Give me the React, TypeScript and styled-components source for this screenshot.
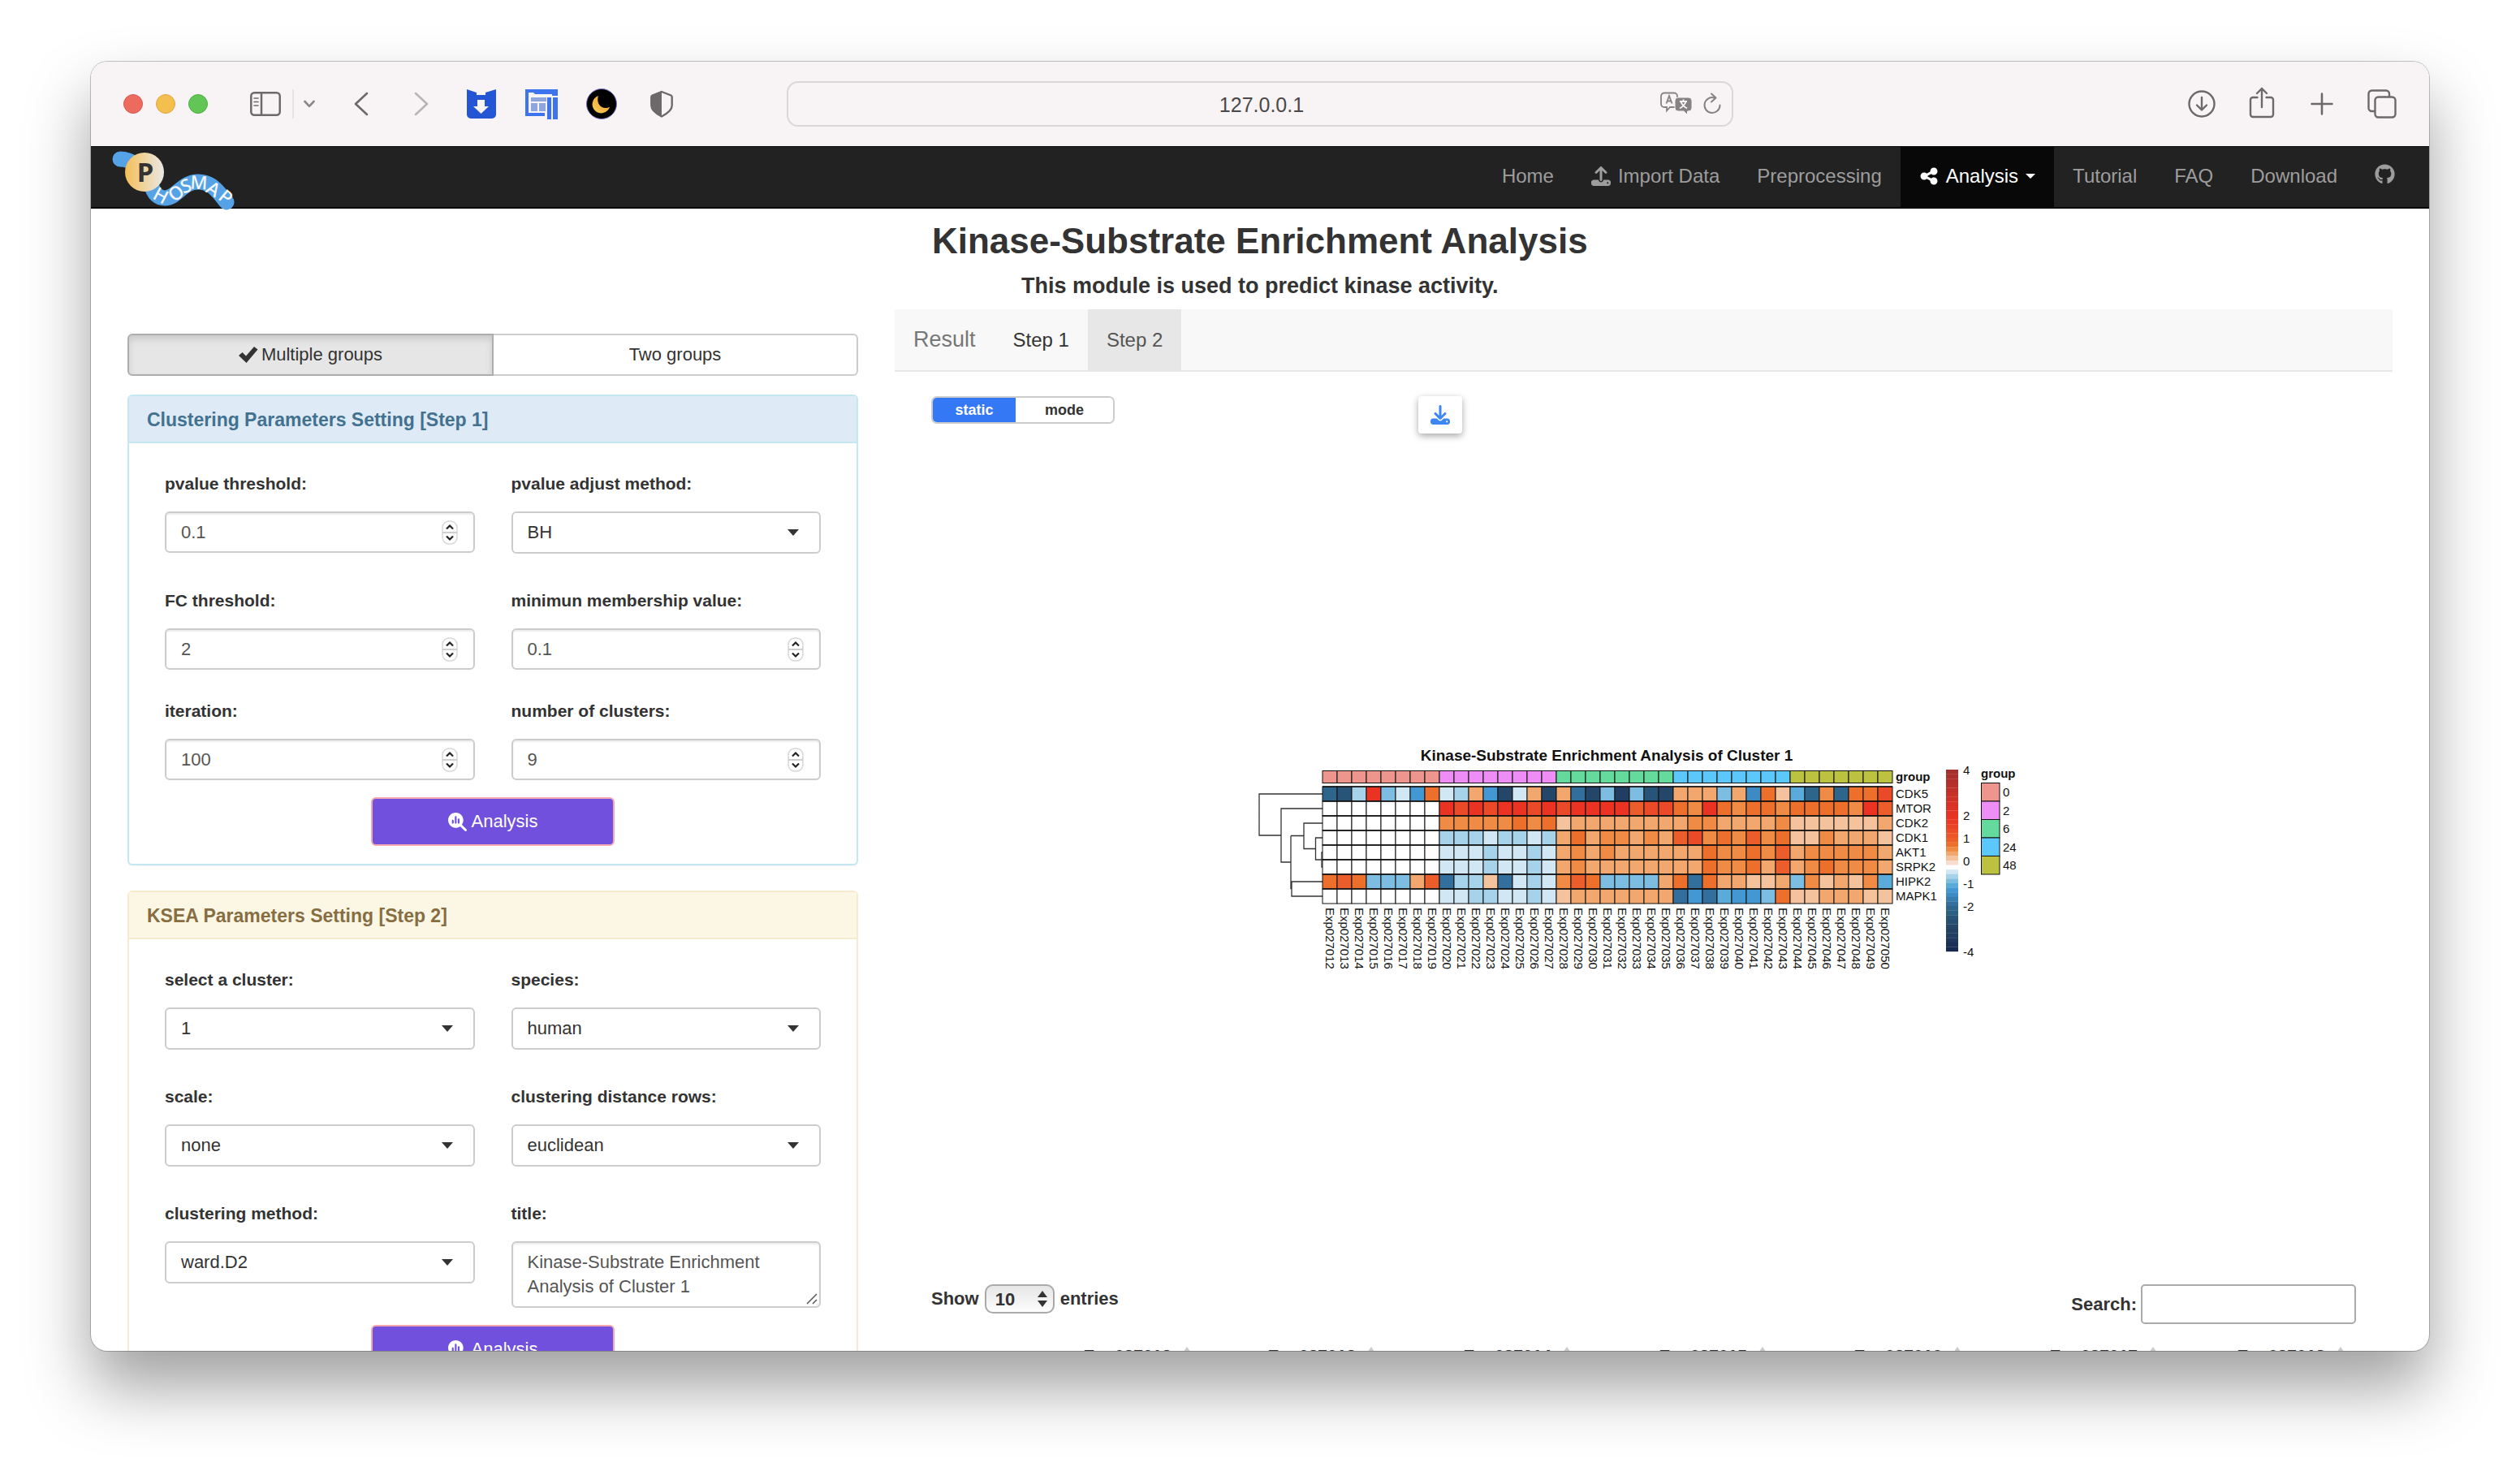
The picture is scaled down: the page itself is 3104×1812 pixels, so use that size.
import React from "react";
import styled, { createGlobalStyle, css } from "styled-components";
import {
  FaDownload,
  FaGithub,
  FaMagnifyingGlassChart,
  FaShareNodes,
  FaUpload,
} from "react-icons/fa6";

const sans = `"Liberation Sans", Arial, Helvetica, sans-serif`;

const GlobalStyle = createGlobalStyle`
  * { box-sizing: border-box; }
  body { margin: 0; background: #fff; color: #333; font-family: ${sans}; font-size: 22px; line-height: 30px; }
  button, input, select, textarea { font-family: inherit; margin: 0; }
`;

/* ---------- window chrome ---------- */

const Desktop = styled.div`
  height: 100vh;
  min-height: 900px;
  padding: 76px 112px 148px;
  display: flex;
  overflow: hidden;
`;

const BrowserWindow = styled.div`
  flex: 1;
  min-width: 0;
  display: flex;
  flex-direction: column;
  border-radius: 20px;
  overflow: hidden;
  background: #fff;
  box-shadow: 0 0 0 1px rgba(0, 0, 0, 0.22), 0 44px 80px rgba(0, 0, 0, 0.38);
`;

const Toolbar = styled.header`
  flex: none;
  height: 104px;
  display: grid;
  grid-template-columns: 1fr 1166px 1fr;
  align-items: center;
  background: #f8f4f5;
  color: #6d6869;
`;

const ToolGroup = styled.div<{ $end?: boolean }>`
  display: flex;
  align-items: center;
  justify-content: ${(p) => (p.$end ? "flex-end" : "flex-start")};
  padding: ${(p) => (p.$end ? "0 21px 0 0" : "0 0 0 40px")};
`;

const Lights = styled.div`
  display: flex;
  gap: 16px;
  margin-right: 52px;
`;

const Light = styled.span<{ $fill: string; $edge: string }>`
  width: 24px;
  height: 24px;
  border-radius: 50%;
  background: ${(p) => p.$fill};
  border: 1px solid ${(p) => p.$edge};
`;

const PlainButton = styled.button`
  display: flex;
  align-items: center;
  justify-content: center;
  padding: 0;
  border: 0;
  background: none;
  color: inherit;
`;

const ToolButton = styled(PlainButton)<{ $faint?: boolean }>`
  width: 74px;
  height: 56px;
  color: ${(p) => (p.$faint ? "#b9b5b6" : "inherit")};
`;

const ToolDivider = styled.span`
  width: 2px;
  height: 36px;
  margin: 0 12px 0 14px;
  background: #e6e2e3;
`;

const ChevronButton = styled(PlainButton)`
  margin-right: 20px;
`;

const AddressBar = styled.div`
  display: flex;
  align-items: center;
  height: 56px;
  padding: 0 12px 0 104px;
  border: 2px solid #dbd7d8;
  border-radius: 14px;
  gap: 12px;
`;

const AddressInput = styled.input`
  flex: 1;
  min-width: 0;
  border: 0;
  background: none;
  text-align: center;
  font-size: 25px;
  line-height: 30px;
  color: #4b4849;
  padding: 2px 0 0;
`;

/* ---------- site navigation ---------- */

const Navbar = styled.nav`
  flex: none;
  display: flex;
  justify-content: space-between;
  padding: 0 19px 0 24px;
  background: #222;
  border-top: 1px solid #080808;
  border-bottom: 2px solid #080808;
`;

const LogoLink = styled.a`
  display: block;
  width: 156px;
  height: 74px;
`;

const Logo = styled.svg`
  display: block;
  overflow: visible;
`;

const NavList = styled.ul`
  display: flex;
  margin: 0;
  padding: 0;
  list-style: none;
`;

const NavLink = styled.a<{ $active?: boolean }>`
  display: flex;
  align-items: center;
  gap: 9px;
  padding: 21px 23px 23px;
  font-size: 24px;
  line-height: 30px;
  text-decoration: none;
  color: ${(p) => (p.$active ? "#fff" : "#9d9d9d")};
  background: ${(p) => (p.$active ? "#080808" : "transparent")};
`;

/* ---------- page ---------- */

const Page = styled.main`
  flex: 1;
  min-height: 0;
  overflow: hidden;
  display: grid;
  grid-template-columns: minmax(0, 1fr) minmax(0, 2.05fr);
  align-items: start;
  gap: 45px;
  padding: 0 45px;
`;

const Sidebar = styled.section`
  padding-top: 154px;
`;

const GroupToggle = styled.div`
  display: flex;
  margin-bottom: 23px;
`;

const GroupButton = styled.button<{ $on?: boolean }>`
  flex: 1;
  display: flex;
  align-items: center;
  justify-content: center;
  gap: 4px;
  height: 52px;
  padding: 0;
  font-size: 22px;
  line-height: 30px;
  color: #333;
  border: 2px solid #ccc;
  background: #fff;
  ${(p) =>
    p.$on
      ? css`
          border-color: #adadad;
          border-radius: 6px 0 0 6px;
          background: #e6e6e6;
          box-shadow: inset 0 5px 8px rgba(0, 0, 0, 0.125);
        `
      : css`
          border-left: 0;
          border-radius: 0 6px 6px 0;
        `}
`;

type Tone = "info" | "warning";
const tones = {
  info: { bg: "#deebf6", edge: "#c4e7f1", text: "#437190" },
  warning: { bg: "#fbf7e4", edge: "#f7ebcf", text: "#876d42" },
};

const Panel = styled.form<{ $tone: Tone }>`
  margin-bottom: 31px;
  border: 2px solid ${(p) => tones[p.$tone].edge};
  border-radius: 6px;
  background: #fff;
  box-shadow: 0 1px 2px rgba(0, 0, 0, 0.05);
`;

const PanelTitle = styled.h3<{ $tone: Tone }>`
  margin: 0;
  padding: 16px 22px 14px;
  font-size: 23px;
  line-height: 26px;
  font-weight: bold;
  color: ${(p) => tones[p.$tone].text};
  background: ${(p) => tones[p.$tone].bg};
  border-bottom: 2px solid ${(p) => tones[p.$tone].edge};
`;

const PanelBody = styled.div`
  padding: 35px 44px 22px;
`;

const FieldRow = styled.div<{ $gap: number }>`
  display: grid;
  grid-template-columns: 1fr 1fr;
  align-items: start;
  column-gap: 45px;
  margin-bottom: ${(p) => p.$gap}px;
`;

const Label = styled.label`
  display: block;
  margin-bottom: 19px;
  font-size: 21px;
  line-height: 30px;
  font-weight: bold;
`;

const control = css`
  width: 100%;
  border: 2px solid #ccc;
  border-radius: 6px;
  background: #fff;
`;

const NumberBox = styled.div`
  ${control}
  display: flex;
  align-items: center;
  height: 51px;
  padding: 0 19px 0 18px;
  box-shadow: inset 0 2px 2px rgba(0, 0, 0, 0.075);
`;

const NumberInput = styled.input`
  flex: 1;
  min-width: 0;
  padding: 0;
  border: 0;
  background: none;
  font-size: 22px;
  line-height: 30px;
  color: #555;
  appearance: textfield;
  -moz-appearance: textfield;
  &::-webkit-inner-spin-button,
  &::-webkit-outer-spin-button {
    appearance: none;
    margin: 0;
  }
`;

const SelectBox = styled.div`
  position: relative;
`;

const Select = styled.select`
  ${control}
  display: block;
  height: 52px;
  padding: 0 50px 0 18px;
  appearance: none;
  font-size: 22px;
  line-height: 30px;
  color: #333;
`;

const SelectCaret = styled.svg`
  position: absolute;
  right: 27px;
  top: 22px;
  pointer-events: none;
`;

const AreaBox = styled.div`
  position: relative;
`;

const TextArea = styled.textarea`
  ${control}
  display: block;
  height: 82px;
  padding: 9px 18px;
  resize: none;
  overflow: hidden;
  font-size: 22px;
  line-height: 30px;
  color: #555;
  box-shadow: inset 0 2px 2px rgba(0, 0, 0, 0.075);
`;

const ResizeGrip = styled.svg`
  position: absolute;
  right: 4px;
  bottom: 4px;
  pointer-events: none;
`;

const RunButton = styled.button`
  display: flex;
  align-items: center;
  justify-content: center;
  gap: 6px;
  width: 300px;
  height: 60px;
  margin: 0 auto;
  padding: 0;
  font-size: 22px;
  line-height: 30px;
  color: #fff;
  background: #7150dd;
  border: 2px solid #f4a9ae;
  border-radius: 6px;
`;

/* ---------- results ---------- */

const Results = styled.section`
  min-width: 0;
`;

const Heading = styled.div`
  width: calc(50% - 23px);
  padding: 15px 0 10px;
  text-align: center;
  white-space: nowrap;
`;

const Title = styled.h1`
  margin: 0 0 11px;
  font-size: 44px;
  line-height: 50px;
  font-weight: bold;
`;

const Subtitle = styled.h2`
  margin: 0;
  font-size: 27px;
  line-height: 38px;
  font-weight: bold;
`;

const TabBar = styled.div`
  display: flex;
  background: #f8f8f8;
  border-bottom: 2px solid #e7e7e7;
`;

const TabBrand = styled.span`
  padding: 22px 23px;
  font-size: 27px;
  line-height: 31px;
  color: #777;
`;

const Tab = styled.button<{ $active?: boolean }>`
  padding: 0 23px;
  border: 0;
  font-size: 24px;
  line-height: 30px;
  color: ${(p) => (p.$active ? "#555" : "#333")};
  background: ${(p) => (p.$active ? "#e7e7e7" : "transparent")};
`;

const TabContent = styled.div`
  padding: 30px 45px 0;
`;

const PlotTools = styled.div`
  display: grid;
  grid-template-columns: repeat(3, 1fr);
  gap: 45px;
  align-items: start;
`;

const ModeSwitch = styled.div`
  display: flex;
  width: 226px;
  height: 34px;
  border: 2px solid #ccc;
  border-radius: 7px;
  overflow: hidden;
`;

const ModeButton = styled.button<{ $on?: boolean }>`
  flex: ${(p) => (p.$on ? "0 0 102px" : "1")};
  padding: 0;
  border: 0;
  font-size: 18px;
  line-height: 30px;
  font-weight: bold;
  color: ${(p) => (p.$on ? "#fff" : "#333")};
  background: ${(p) => (p.$on ? "#3478f6" : "#fff")};
`;

const DownloadButton = styled(PlainButton)`
  width: 54px;
  height: 46px;
  border-radius: 4px;
  color: #3d86f5;
  background: #fff;
  box-shadow: 0 3px 8px rgba(0, 0, 0, 0.35);
`;

const PlotArea = styled.div`
  display: flex;
  align-items: center;
  justify-content: center;
  min-height: 1048px;
`;

const TableTools = styled.div`
  display: flex;
  justify-content: space-between;
  align-items: flex-start;
  height: 49px;
  margin-bottom: 24px;
  font-size: 22px;
  font-weight: bold;
`;

const InlineLabel = styled.label<{ $tall?: boolean }>`
  display: flex;
  align-items: center;
  gap: ${(p) => (p.$tall ? "5px" : "7px")};
  height: ${(p) => (p.$tall ? "49px" : "36px")};
`;

const LengthBox = styled.span`
  position: relative;
  display: block;
`;

const LengthSelect = styled.select`
  display: block;
  width: 86px;
  height: 36px;
  padding: 0 0 0 11px;
  appearance: none;
  font-size: 22px;
  font-weight: bold;
  color: #333;
  border: 2px solid #a9a9a9;
  border-radius: 10px;
  background: linear-gradient(#e6e6e6, #fdfdfd);
`;

const LengthArrows = styled.svg`
  position: absolute;
  right: 9px;
  top: 8px;
  pointer-events: none;
`;

const SearchInput = styled.input`
  width: 265px;
  height: 49px;
  padding: 0 8px;
  border: 2px solid #aaa;
  border-radius: 5px;
  font-size: 22px;
`;

const DataTable = styled.table`
  width: 100%;
  table-layout: fixed;
  border-collapse: collapse;
  font-size: 21px;
`;

const HeadCell = styled.th`
  padding: 0 14px 0 0;
  text-align: right;
  white-space: nowrap;
`;

const SortMark = styled.svg`
  margin-left: 14px;
  vertical-align: top;
  margin-top: 4px;
`;

/* ---------- heat map data ---------- */

const palette: Record<string, string> = {
  ".": "#ffffff",
  a: "#f4c39d", b: "#f2a76f", c: "#f08b45", d: "#ec6f2c", e: "#eb5d2a", f: "#ea4a27", g: "#ea3323",
  p: "#d1e7f3", q: "#a6d3ea", r: "#7dbde2", s: "#5aaada", t: "#4397d3", u: "#3e8bc3",
  v: "#326f9c", w: "#2e668b", x: "#285577", y: "#244769", z: "#213d62",
};

const kinases: [string, string][] = [
  ["CDK5", "wxqgrptdpqbtypby" + "bvyrzrxybbbrbudaswcwddf"],
  ["MTOR", "........gfgfggfg" + "fggggeffdcgdcddcddddcge"],
  ["CDK2", "........cccccdcd" + "abbbbbbbbccbbbbcaaaaaab"],
  ["CDK1", "........qqqpqqpq" + "bdbccbcbefcdcecdaacbbba"],
  ["AKT1", "........pppqppqp" + "bcbcbbbbbbdccdcebcccccb"],
  ["SRPK2", "........pppqppqp" + "bcbbbbbbbbdccdbebcdcccb"],
  ["HIPK2", "dedrrrbevqqavpqp" + "cedrrrrbdvdbbaabrcabacs"],
  ["MAPK1", "........ppqqppqp" + "abbbbbbbvtvsttrdaabbbaa"],
];

const groups = [
  { name: "0", color: "#ee958d", size: 8 },
  { name: "2", color: "#ee8df6", size: 8 },
  { name: "6", color: "#64da9c", size: 8 },
  { name: "24", color: "#5cc7fa", size: 8 },
  { name: "48", color: "#bdc140", size: 7 },
];

const groupColors = groups.flatMap((g) => Array<string>(g.size).fill(g.color));

const scale = [
  "#a6302c", "#ab302b", "#b2302b", "#b9302a", "#c03029", "#c73128", "#ce3127", "#d63226", "#dd3225", "#e43224",
  "#ea3323", "#ea3b25", "#ea4426", "#eb4d27", "#eb5628", "#eb5f2a", "#ec6f2c", "#f08b45", "#f2a76f", "#f4c39d",
  "#f9ddcc", "#ffffff", "#d1e7f3", "#a6d3ea", "#7dbde2", "#5aaada", "#4397d3", "#3e8bc3", "#377db0", "#326f9c",
  "#2e668b", "#285f83", "#285577", "#264e70", "#244769", "#234263", "#213d62", "#1f375e", "#1b3058", "#172851",
];

const CELL = 18;
const GX = 88;
const GY = 49;

function Heatmap() {
  return (
    <svg width="968" height="276" viewBox="0 0 968 276" role="img" aria-label="Kinase heat map" fontFamily={sans} fontSize="15" fill="#111">
      <text x="438" y="17" textAnchor="middle" fontSize="19" fontWeight="bold">
        Kinase-Substrate Enrichment Analysis of Cluster 1
      </text>
      <path
        d="M88 58H10V109H37 M88 76H37V142H49 M49 109.500V174.500H50 M49 109.500H65 M88 94H65V125.500H79.500 M88 112H79.500V139H87 M88 130H87V148H88 M88 166H50V184H88"
        fill="none"
        stroke="#333"
        strokeWidth="1.300"
      />
      <g stroke="#111" strokeWidth="1">
        {groupColors.map((c, i) => (
          <rect key={i} x={GX + i * CELL} y="29.500" width={CELL} height="15" fill={c} />
        ))}
        {kinases.map(([name, cells], r) =>
          cells.split("").map((k, i) => (
            <rect key={name + i} x={GX + i * CELL} y={GY + r * CELL} width={CELL} height={CELL} fill={palette[k]} />
          )),
        )}
        {kinases.map(([name], r) => (
          <path key={name} d={`M${GX} ${GY + r * CELL}h${39 * CELL}`} strokeWidth="1.600" />
        ))}
      </g>
      <text x="794" y="42" fontWeight="bold">group</text>
      {kinases.map(([name], r) => (
        <text key={name} x="794" y={GY + r * CELL + 14}>{name}</text>
      ))}
      {groupColors.map((_, i) => (
        <text key={i} transform={`translate(${GX + i * CELL + 4} 198) rotate(90)`}>{`Exp0270${12 + i}`}</text>
      ))}
      {scale.map((c, i) => (
        <rect key={i} x="856" y={28 + i * 5.6} width="15" height="5.800" fill={c} />
      ))}
      {[4, 2, 1, 0, -1, -2, -4].map((v) => (
        <text key={v} x="877" y={145.500 - v * 28}>{v}</text>
      ))}
      <text x="899" y="38" fontWeight="bold">group</text>
      {groups.map((g, i) => (
        <g key={g.name}>
          <rect x="899.500" y={44.500 + i * 22.500} width="22.500" height="22.500" fill={g.color} stroke="#111" />
          <text x="926" y={61 + i * 22.500}>{g.name}</text>
        </g>
      ))}
    </svg>
  );
}

/* ---------- form parts ---------- */

function NumberField({ id, label, value }: { id: string; label: string; value: string }) {
  return (
    <div>
      <Label htmlFor={id}>{label}</Label>
      <NumberBox>
        <NumberInput id={id} type="number" step="any" defaultValue={value} />
        <svg width="20" height="30" viewBox="0 0 20 30" fill="none" aria-hidden="true">
          <rect x="1" y="1" width="18" height="28" rx="8" fill="#fff" stroke="#d6d6d6" strokeWidth="1.500" />
          <path d="M1 15h18" stroke="#cfcfcf" strokeWidth="2" />
          <path d="M6 10.500l4-4 4 4M6 19.500l4 4 4-4" stroke="#222" strokeWidth="2.200" />
        </svg>
      </NumberBox>
    </div>
  );
}

function SelectField({ id, label, value }: { id: string; label: string; value: string }) {
  return (
    <div>
      <Label htmlFor={id}>{label}</Label>
      <SelectBox>
        <Select id={id} defaultValue={value}>
          <option>{value}</option>
        </Select>
        <SelectCaret width="14" height="8" viewBox="0 0 14 8" aria-hidden="true">
          <path d="M0 0h14L7 8z" fill="#333" />
        </SelectCaret>
      </SelectBox>
    </div>
  );
}

function AnalysisButton() {
  return (
    <RunButton type="button">
      <FaMagnifyingGlassChart size={23} />
      Analysis
    </RunButton>
  );
}

const logoLetters: [string, number, number, number][] = [
  ["H", 62, 57, 28],
  ["O", 81, 54, -38],
  ["S", 93, 45, -20],
  ["M", 109, 41, 3],
  ["A", 127, 49, 32],
  ["P", 142, 59, 40],
];

function SiteLogo() {
  return (
    <Logo width="156" height="77" viewBox="0 0 156 77" role="img" aria-label="PhosMap">
      <defs>
        <linearGradient id="coin" x1="0" x2="1" y1="0" y2="0">
          <stop offset="0" stopColor="#f4bf58" />
          <stop offset="1" stopColor="#e9e8e6" />
        </linearGradient>
      </defs>
      <g fill="none" stroke="#55a3e6" strokeWidth="19" strokeLinecap="round" transform="translate(0 3)">
        <path d="M12 12Q22 12 32 19" />
        <path d="M50 42C53 56 60 60 67 60C82 60 88 40 108 40C126 40 134 54 143 65" />
      </g>
      <g transform="translate(0 3)" textAnchor="middle">
        <circle cx="42" cy="28" r="24" fill="url(#coin)" />
        <text x="43" y="40" fontFamily={`"Noto Sans", sans-serif`} fontSize="33" fontWeight="bold" fill="#333">P</text>
        {logoLetters.map(([ch, x, y, turn]) => (
          <text
            key={ch + x}
            transform={`translate(${x} ${y}) rotate(${turn})`}
            y="8"
            fontFamily={`"Noto Sans", sans-serif`}
            fontSize="23"
            fontWeight="500"
            fill="#f4f6f8"
          >
            {ch}
          </text>
        ))}
      </g>
    </Logo>
  );
}

const headers: [string, string][] = [
  ["Exp027012", "19.03%"],
  ["Exp027013", "12.94%"],
  ["Exp027014", "13.73%"],
  ["Exp027015", "13.73%"],
  ["Exp027016", "13.68%"],
  ["Exp027017", "13.73%"],
  ["Exp027018", "13.16%"],
];

export default function App() {
  return (
    <Desktop>
      <GlobalStyle />
      <BrowserWindow>
        <Toolbar>
          <ToolGroup>
            <Lights>
              <Light $fill="#ed6a5f" $edge="#d75850" />
              <Light $fill="#f5bf4f" $edge="#dda640" />
              <Light $fill="#61c655" $edge="#50ab45" />
            </Lights>
            <PlainButton aria-label="Sidebar">
              <svg width="38" height="30" viewBox="0 0 38 30" fill="none" stroke="currentColor" strokeWidth="2.500">
                <rect x="1.300" y="1.300" width="35.400" height="27.400" rx="4" />
                <path d="M14 1v28" />
                <path d="M5 8h5M5 12.500h5M5 17h5" strokeWidth="1.600" strokeLinecap="round" />
              </svg>
            </PlainButton>
            <ToolDivider />
            <ChevronButton aria-label="Sidebar options">
              <svg width="14" height="10" viewBox="0 0 14 10" fill="none" stroke="#8b8788" strokeWidth="2.600" strokeLinecap="round" strokeLinejoin="round">
                <path d="M1.500 2l5.500 5.800L12.500 2" />
              </svg>
            </ChevronButton>
            <ToolButton aria-label="Back">
              <svg width="18" height="30" viewBox="0 0 18 30" fill="none" stroke="currentColor" strokeWidth="2.600" strokeLinecap="round" strokeLinejoin="round">
                <path d="M16 2L2 15l14 13" />
              </svg>
            </ToolButton>
            <ToolButton aria-label="Forward" $faint>
              <svg width="18" height="30" viewBox="0 0 18 30" fill="none" stroke="currentColor" strokeWidth="2.600" strokeLinecap="round" strokeLinejoin="round">
                <path d="M2 2l14 13L2 28" />
              </svg>
            </ToolButton>
            <ToolButton aria-label="Saver extension">
              <svg width="36" height="36" viewBox="0 0 36 36">
                <path d="M0 0l12 4v3h11V4l13-4v31a5 5 0 0 1-5 5H5a5 5 0 0 1-5-5z" fill="#2355d5" />
                <path d="M13 13h9v8h5l-9.500 9L8 21h5z" fill="#f8f4f5" />
              </svg>
            </ToolButton>
            <ToolButton aria-label="Reader extension">
              <svg width="40" height="38" viewBox="0 0 40 38">
                <path d="M0 1h40v8h-7v-2H12l-2-2H4v25h20v4H0z" fill="#3d74ee" />
                <g fill="#8fa5dd">
                  <path d="M7 11h19v5H7zM7 18h8v10H7zM17 18h8v10h-8z" />
                </g>
                <path d="M27 11h5v27h-5zM34 11h6v27h-6z" fill="#3d74ee" />
              </svg>
            </ToolButton>
            <ToolButton aria-label="Night mode extension">
              <svg width="38" height="38" viewBox="0 0 38 38">
                <defs>
                  <linearGradient id="moon" x1="0" x2="1" y1="1" y2="0">
                    <stop offset="0" stopColor="#f8cf57" />
                    <stop offset="1" stopColor="#f09a2e" />
                  </linearGradient>
                </defs>
                <circle cx="19" cy="19" r="18.500" fill="#000" stroke="#7b73c9" />
                <path d="M15 9a11 11 0 1 0 14 14c-10 4-17-4-14-14z" fill="url(#moon)" />
              </svg>
            </ToolButton>
            <ToolButton aria-label="Privacy report">
              <svg width="28" height="34" viewBox="0 0 28 34">
                <path d="M14 2l11.500 4.500c1 .5 1.200 1 1.200 2V19c0 6-6 10-12.700 13.500C7.300 29 1.300 25 1.300 19V8.500c0-1 .2-1.500 1.200-2z" fill="none" stroke="currentColor" strokeWidth="2.400" />
                <path d="M14 2L2.500 6.500c-1 .5-1.200 1-1.200 2V19c0 6 6 10 12.700 13.500z" fill="currentColor" />
              </svg>
            </ToolButton>
          </ToolGroup>

          <AddressBar>
            <AddressInput aria-label="Address" defaultValue="127.0.0.1" />
            <PlainButton aria-label="Translate">
              <svg width="40" height="30" viewBox="0 0 40 30" fill="none">
                <path d="M5 1.500h12a4 4 0 0 1 4 4V15a4 4 0 0 1-4 4h-5l-4 4.500V19H5a4 4 0 0 1-4-4V5.500a4 4 0 0 1 4-4z" stroke="#868283" strokeWidth="1.800" />
                <path d="M7.500 14.500L11 5l3.500 9.500M8.700 11.500h4.600" stroke="#868283" strokeWidth="1.800" />
                <path d="M22 7h13a4 4 0 0 1 4 4v9a4 4 0 0 1-4 4h-1.500v4.500L29 24h-7a4 4 0 0 1-4-4v-9a4 4 0 0 1 4-4z" fill="#868283" stroke="#f8f4f5" strokeWidth="1" />
                <path d="M24 12h9M28.500 9.500V12M25.500 12.500q2 5 7.500 8M31.500 12.500q-2 5-7.500 8" stroke="#f8f4f5" strokeWidth="1.900" />
              </svg>
            </PlainButton>
            <PlainButton aria-label="Reload">
              <svg width="24" height="28" viewBox="0 0 24 28" fill="none" stroke="#868283" strokeWidth="2" strokeLinecap="round" strokeLinejoin="round">
                <path d="M15 6.500a9.500 9.500 0 1 0 6.500 9" />
                <path d="M11 1.500l5.500 5-5.500 5" />
              </svg>
            </PlainButton>
          </AddressBar>

          <ToolGroup $end>
            <ToolButton aria-label="Downloads">
              <svg width="34" height="34" viewBox="0 0 34 34" fill="none" stroke="currentColor" strokeWidth="2.400" strokeLinecap="round" strokeLinejoin="round">
                <circle cx="17" cy="17" r="15.500" />
                <path d="M17 9v15M11 18.500l6 6 6-6" />
              </svg>
            </ToolButton>
            <ToolButton aria-label="Share">
              <svg width="32" height="42" viewBox="0 0 32 42" fill="none" stroke="currentColor" strokeWidth="2.400" strokeLinecap="round" strokeLinejoin="round">
                <path d="M10.500 13H5a3 3 0 0 0-3 3v18a3 3 0 0 0 3 3h22a3 3 0 0 0 3-3V16a3 3 0 0 0-3-3h-5.500" />
                <path d="M16 25V2M10 8l6-6 6 6" />
              </svg>
            </ToolButton>
            <ToolButton aria-label="New tab">
              <svg width="28" height="28" viewBox="0 0 28 28" fill="none" stroke="currentColor" strokeWidth="2.600" strokeLinecap="round">
                <path d="M14 1.500v25M1.500 14h25" />
              </svg>
            </ToolButton>
            <ToolButton aria-label="Tab overview">
              <svg width="36" height="36" viewBox="0 0 36 36" fill="none" stroke="currentColor" strokeWidth="2.400" strokeLinejoin="round">
                <rect x="9.500" y="9.500" width="25" height="25" rx="4" />
                <path d="M9 27H5.500a4 4 0 0 1-4-4V5.500a4 4 0 0 1 4-4H23a4 4 0 0 1 4 4V9" />
              </svg>
            </ToolButton>
          </ToolGroup>
        </Toolbar>

        <Navbar>
          <LogoLink href="#home"><SiteLogo /></LogoLink>
          <NavList>
            <li><NavLink href="#home">Home</NavLink></li>
            <li><NavLink href="#import"><FaUpload size={24} />Import Data</NavLink></li>
            <li><NavLink href="#preprocessing">Preprocessing</NavLink></li>
            <li>
              <NavLink href="#analysis" $active>
                <FaShareNodes size={24} />
                Analysis
                <svg width="12" height="6" viewBox="0 0 12 6" aria-hidden="true"><path d="M0 0h12L6 6z" fill="currentColor" /></svg>
              </NavLink>
            </li>
            <li><NavLink href="#tutorial">Tutorial</NavLink></li>
            <li><NavLink href="#faq">FAQ</NavLink></li>
            <li><NavLink href="#download">Download</NavLink></li>
            <li><NavLink href="#source" aria-label="GitHub"><FaGithub size={25} /></NavLink></li>
          </NavList>
        </Navbar>

        <Page>
          <Sidebar>
            <GroupToggle>
              <GroupButton $on>
                <svg width="24" height="20" viewBox="0 0 24 20" aria-hidden="true">
                  <path d="M0 11l4.500-4 4.500 4.500L19 0l4.500 3.500L9.500 20z" fill="#333" />
                </svg>
                Multiple groups
              </GroupButton>
              <GroupButton>Two groups</GroupButton>
            </GroupToggle>

            <Panel $tone="info">
              <PanelTitle $tone="info">Clustering Parameters Setting [Step 1]</PanelTitle>
              <PanelBody>
                <FieldRow $gap={43}>
                  <NumberField id="pvalue" label="pvalue threshold:" value="0.1" />
                  <SelectField id="adjust" label="pvalue adjust method:" value="BH" />
                </FieldRow>
                <FieldRow $gap={36}>
                  <NumberField id="fc" label="FC threshold:" value="2" />
                  <NumberField id="membership" label="minimun membership value:" value="0.1" />
                </FieldRow>
                <FieldRow $gap={21}>
                  <NumberField id="iteration" label="iteration:" value="100" />
                  <NumberField id="clusters" label="number of clusters:" value="9" />
                </FieldRow>
                <AnalysisButton />
              </PanelBody>
            </Panel>

            <Panel $tone="warning">
              <PanelTitle $tone="warning">KSEA Parameters Setting [Step 2]</PanelTitle>
              <PanelBody>
                <FieldRow $gap={43}>
                  <SelectField id="cluster" label="select a cluster:" value="1" />
                  <SelectField id="species" label="species:" value="human" />
                </FieldRow>
                <FieldRow $gap={43}>
                  <SelectField id="scale" label="scale:" value="none" />
                  <SelectField id="distance" label="clustering distance rows:" value="euclidean" />
                </FieldRow>
                <FieldRow $gap={21}>
                  <SelectField id="method" label="clustering method:" value="ward.D2" />
                  <div>
                    <Label htmlFor="title">title:</Label>
                    <AreaBox>
                      <TextArea id="title" defaultValue="Kinase-Substrate Enrichment Analysis of Cluster 1" />
                      <ResizeGrip width="14" height="14" viewBox="0 0 14 14" stroke="#555" strokeWidth="1.500" aria-hidden="true">
                        <path d="M1 13L13 1M8 13l5-5" />
                      </ResizeGrip>
                    </AreaBox>
                  </div>
                </FieldRow>
                <AnalysisButton />
              </PanelBody>
            </Panel>
          </Sidebar>

          <Results>
            <Heading>
              <Title>Kinase-Substrate Enrichment Analysis</Title>
              <Subtitle>This module is used to predict kinase activity.</Subtitle>
            </Heading>
            <TabBar>
              <TabBrand>Result</TabBrand>
              <Tab>Step 1</Tab>
              <Tab $active>Step 2</Tab>
            </TabBar>
            <TabContent>
              <PlotTools>
                <ModeSwitch>
                  <ModeButton $on>static</ModeButton>
                  <ModeButton>mode</ModeButton>
                </ModeSwitch>
                <DownloadButton aria-label="Download plot"><FaDownload size={24} /></DownloadButton>
              </PlotTools>
              <PlotArea>
                <Heatmap />
              </PlotArea>
              <TableTools>
                <InlineLabel>
                  Show
                  <LengthBox>
                    <LengthSelect defaultValue="10"><option>10</option></LengthSelect>
                    <LengthArrows width="12" height="20" viewBox="0 0 12 20" aria-hidden="true">
                      <path d="M0 8l6-8 6 8zM0 12l6 8 6-8z" fill="#333" />
                    </LengthArrows>
                  </LengthBox>
                  entries
                </InlineLabel>
                <InlineLabel $tall>
                  Search:
                  <SearchInput type="search" />
                </InlineLabel>
              </TableTools>
              <DataTable>
                <colgroup>
                  {headers.map(([name, width]) => (
                    <col key={name} width={width} />
                  ))}
                </colgroup>
                <thead>
                  <tr>
                    {headers.map(([name]) => (
                      <HeadCell key={name} scope="col">
                        {name}
                        <SortMark width="10" height="18" viewBox="0 0 10 18" aria-hidden="true">
                          <path d="M5 0l5 7H0zM5 18l5-7H0z" fill="#ccc" />
                        </SortMark>
                      </HeadCell>
                    ))}
                  </tr>
                </thead>
              </DataTable>
            </TabContent>
          </Results>
        </Page>
      </BrowserWindow>
    </Desktop>
  );
}
